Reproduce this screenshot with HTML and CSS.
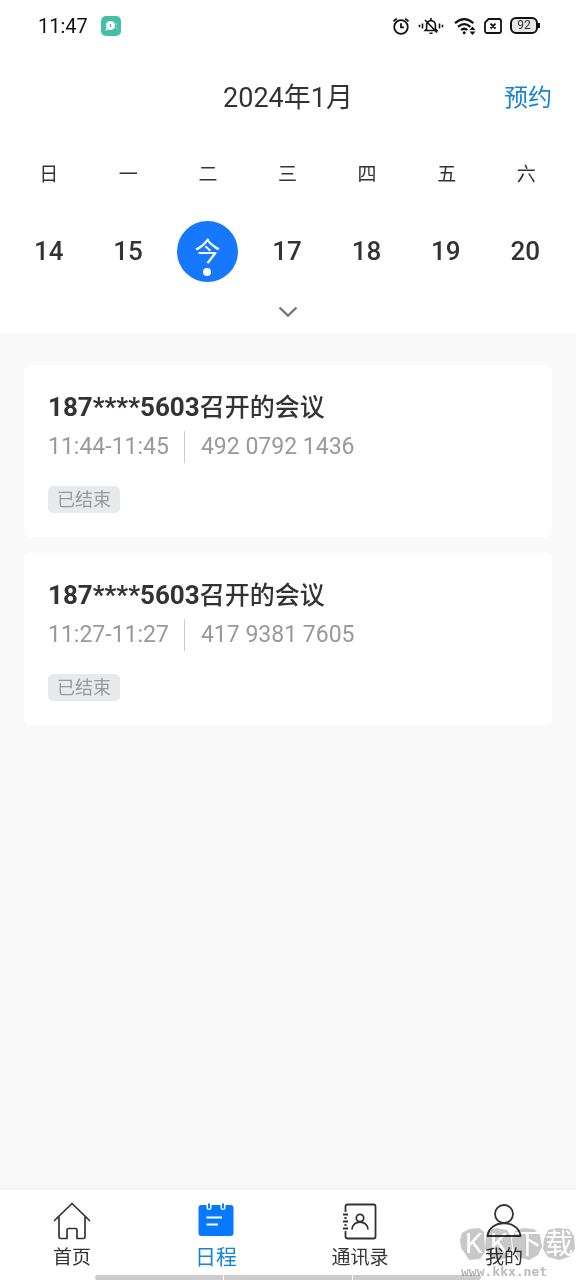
FILE: index.html
```html
<!DOCTYPE html>
<html lang="zh-CN">
<head>
<meta charset="utf-8">
<meta name="viewport" content="width=device-width, initial-scale=1">
<title>日程</title>
<link rel="stylesheet" href="styles.css">
</head>
<body>
<div class="app">
  <div class="status">
    <span class="clock">11:47</span>
    <svg class="app-badge" width="20" height="20" viewBox="0 0 20 20"><rect width="20" height="20" rx="5" fill="#45bea7"/><circle cx="9.500" cy="9.500" r="4.500" fill="#fff"/><path d="M9.500 8v3" stroke="#45bea7" stroke-width="1.400"/><circle cx="5.500" cy="13.500" r="1" fill="#fff"/><path d="M14.500 8h2M14.500 12h2" stroke="#b9eadf"/></svg>
    <div class="status-icons">
      <svg width="18" height="18" viewBox="0 0 18 18" fill="none" stroke="#111" stroke-width="1.8"><circle cx="9" cy="10" r="6.8"/><path d="M9 6.3v4h3M1.500 4.200 4.800 1.600M16.500 4.200 13.200 1.600"/></svg>
      <svg width="26" height="18" viewBox="0 0 26 18" fill="none" stroke="#111" stroke-width="1.6"><path d="M8.600 12V8a4.400 4.400 0 0 1 8.800 0v4l1.400 1.500H7.200zM13 1v2.500M11.500 16.200h3M7 3l12 12.500M4.500 6.500v5M1.500 7.800v2.400M21.500 6.500v5M24.500 7.800v2.400"/></svg>
      <svg class="wifi" width="22" height="18" viewBox="0 0 22 18" fill="none" stroke="#111" stroke-width="2.2"><path d="M1 6.200q9.200-8 18.400 0M4 9.800q6.200-5.200 12.400 0M7 13q3.200-2.500 6.400 0"/><circle cx="10.200" cy="15.800" r="1.500" fill="#111" stroke="none"/><path d="m15.500 13 3-3.500 3 3.500zM15.500 14.500l3 3.500 3-3.500z" fill="#111" stroke="none"/></svg>
      <svg width="18" height="18" viewBox="0 0 18 18" fill="none" stroke="#111" stroke-width="1.800"><path d="M4.500 2H15a2 2 0 0 1 2 2v10a2 2 0 0 1-2 2H3a2 2 0 0 1-2-2V5.500zM6.500 6.700l5 4.800M11.500 6.700l-5 4.800"/></svg>
      <span class="battery">92</span>
    </div>
  </div>

  <header class="calendar">
    <div class="month-row">
      <h1 class="month">2024年1月</h1>
      <button class="book" type="button">预约</button>
    </div>
    <div class="week">
      <span>日</span><span>一</span><span>二</span><span>三</span><span>四</span><span>五</span><span>六</span>
    </div>
    <div class="dates">
      <button type="button">14</button>
      <button type="button">15</button>
      <button type="button" class="today" aria-current="date">今</button>
      <button type="button">17</button>
      <button type="button">18</button>
      <button type="button">19</button>
      <button type="button">20</button>
    </div>
    <button class="expand" type="button" aria-label="展开"><svg width="20" height="12" viewBox="0 0 20 12" fill="none" stroke="#777" stroke-width="2.400"><path d="m1.500 1.500 8.500 8 8.500-8"/></svg></button>
  </header>

  <main class="meetings">
    <article class="card">
      <h2 class="card-title"><b>187****5603</b>召开的会议</h2>
      <div class="card-info"><span>11:44-11:45</span><span class="meeting-id">492 0792 1436</span></div>
      <span class="tag">已结束</span>
    </article>
    <article class="card">
      <h2 class="card-title"><b>187****5603</b>召开的会议</h2>
      <div class="card-info"><span>11:27-11:27</span><span class="meeting-id">417 9381 7605</span></div>
      <span class="tag">已结束</span>
    </article>
  </main>

  <nav class="tabs">
    <a href="#home"><svg width="40" height="40" viewBox="0 0 40 40" fill="none" stroke="#333" stroke-width="1.700" stroke-linejoin="round" stroke-linecap="round"><path d="M2.500 20.500 20 3.500l17.500 17M7 17v20q0 1.500 1.500 1.500H15V30q0-1.500 1.500-1.500h7Q25 28.500 25 30v8.500h6.500q1.500 0 1.500-1.500V17"/></svg><span>首页</span></a>
    <a href="#schedule" class="active"><svg width="40" height="40" viewBox="0 0 40 40"><rect x="2.500" y="5" width="35" height="31" rx="3" fill="#0878ff"/><path d="M13 4v3.500M27 4v3.500" stroke="#fff" stroke-width="5" stroke-linecap="round"/><path d="M13 3.500v5M27 3.500v5" stroke="#0878ff" stroke-width="2"/><path d="M10.500 17.500H26M10.500 24.500H22" stroke="#fff" stroke-width="2"/></svg><span>日程</span></a>
    <a href="#contacts"><svg width="40" height="40" viewBox="0 0 40 40" fill="none" stroke="#333" stroke-width="1.800"><path d="M5.500 12V6.500q0-2 2-2h26q2 0 2 2v30q0 2-2 2h-26q-2 0-2-2V31M3 14.500h5M3 21.500h5M3 28.500h5M4.500 18h2M4.500 25h2"/><circle cx="20" cy="18" r="3.700"/><path d="M12 29.500c.5-10 15.500-10 16 0"/></svg><span>通讯录</span></a>
    <a href="#me"><svg width="40" height="40" viewBox="0 0 40 40" fill="none" stroke="#333" stroke-width="1.800" stroke-linejoin="round"><circle cx="20" cy="14" r="9"/><path d="M3.500 36c2-17 31-17 33 0z"/></svg><span>我的</span></a>
    <div class="home-bar"></div>
    <svg class="watermark" width="116" height="54" viewBox="0 0 116 54">
      <g fill="#c8c8c8">
        <path d="m2 7 7-4 10-1 5 4 1 20-5 7-11 1-3-5-5-7-1-8z"/>
        <path d="m28 4 9-2 10 2 4 6 1 13-5 9-9 2-9-4-4-8 1-12z"/>
        <path d="m55 5 8-3 11 1 6 6 2 12-4 8-9 5-11-3-5-9-1-9z"/>
        <path d="m88 4 9-2 12 1 5 7 1 13-6 8-10 3-11-3-5-8 1-10z"/>
      </g>
      <g class="brand"><text x="5" y="27">K</text><text x="30" y="27">K</text><text x="54" y="28">下</text><text x="85" y="28">载</text></g>
      <text class="site" x="1" y="50">www.kkx.net</text>
    </svg>
  </nav>
</div>
</body>
</html>
```
FILE: styles.css
```css
* { box-sizing: border-box; }
body {
  margin: 0;
  background: #f9f9f9;
  color: #333;
  font-family: Roboto, "Noto Sans CJK SC", sans-serif;
}
button {
  border: 0;
  padding: 0;
  background: none;
  color: inherit;
  font: inherit;
}
svg { display: block; }
.app {
  display: flex;
  flex-direction: column;
  min-height: 100vh;
}
.status {
  display: flex;
  align-items: center;
  height: 51px;
  padding: 0 38px;
  background: #fff;
}
.clock {
  color: #111;
  font-size: 20px;
}
.app-badge { margin-left: 13px; }
.status-icons {
  display: flex;
  align-items: center;
  gap: 8px;
  margin-left: auto;
}
.wifi { margin-left: 2px; }
.battery {
  position: relative;
  width: 28px;
  border: 2px solid #111;
  border-radius: 6px;
  background: #e6e6e6;
  color: #333;
  font-size: 12px;
  line-height: 13px;
  text-align: center;
}
.battery::after {
  content: "";
  position: absolute;
  top: 4px;
  right: -4px;
  width: 2px;
  height: 5px;
  background: #111;
}
.calendar { background: #fff; }
.month-row {
  display: grid;
  grid-template-columns: 1fr auto 1fr;
  align-items: center;
  height: 88px;
  padding: 0 24px;
}
.month {
  grid-column: 2;
  margin: 0;
  font-size: 27px;
  font-weight: 400;
}
.book {
  justify-self: end;
  color: #1684d8;
  font-size: 24px;
}
.week, .dates {
  display: grid;
  grid-template-columns: repeat(7, 1fr);
  align-items: center;
  justify-items: center;
}
.week {
  height: 66px;
  padding: 0 10px 0 9px;
  font-size: 19px;
}
.dates {
  height: 92px;
  padding: 0 11px 0 9px;
  font-size: 26px;
  font-weight: 500;
}
.today {
  position: relative;
  width: 61px;
  height: 61px;
  padding-bottom: 4px;
  border-radius: 50%;
  background: #1677ff;
  color: #fff;
  font-weight: 400;
}
.today::after {
  content: "";
  position: absolute;
  left: 26px;
  bottom: 6px;
  width: 8px;
  height: 8px;
  border-radius: 50%;
  background: #fff;
}
.expand {
  display: flex;
  align-items: center;
  justify-content: center;
  width: 100%;
  height: 36px;
  padding-bottom: 6px;
}
.meetings {
  flex: 1;
  display: flex;
  flex-direction: column;
  gap: 16px;
  padding: 32px 24px;
}
.card {
  padding: 24px;
  border-radius: 6px;
  background: #fff;
}
.card-title {
  margin: 0;
  font-size: 25px;
  font-weight: 500;
  line-height: 37px;
}
.card-title b {
  font-size: 26px;
  font-weight: 700;
}
.card-info {
  display: flex;
  margin-top: 5px;
  color: #999;
  font-size: 23px;
  line-height: 32px;
}
.meeting-id {
  margin-left: 15px;
  padding-left: 16px;
  border-left: 1px solid #ccc;
}
.tag {
  display: block;
  width: fit-content;
  margin-top: 23px;
  padding: 0 9px;
  border-radius: 5px;
  background: #e7e9ed;
  color: #999;
  font-size: 18px;
  line-height: 27px;
}
.tabs {
  position: relative;
  display: grid;
  grid-template-columns: repeat(4, 1fr);
  height: 90px;
  padding-top: 10px;
  background: #fff;
  box-shadow: 0 -2px 8px rgba(0, 0, 0, 0.04);
}
.tabs a {
  display: flex;
  flex-direction: column;
  align-items: center;
  color: #333;
  font-size: 19px;
  line-height: 36px;
  text-decoration: none;
}
.tabs .active {
  color: #1684d8;
  font-size: 21px;
  line-height: 34px;
}
.home-bar {
  position: absolute;
  right: 95px;
  bottom: 0;
  left: 95px;
  height: 5px;
  border-radius: 3px;
  background: repeating-linear-gradient(90deg, #ccc 0 128px, #fff 128px 129px);
}
.watermark {
  position: absolute;
  right: 0;
  bottom: 0;
  mix-blend-mode: multiply;
  pointer-events: none;
}
.brand {
  fill: #fff;
  font-size: 28px;
}
.site {
  fill: #bbb;
  font-family: "DejaVu Sans Mono", monospace;
  font-size: 13px;
  font-weight: 700;
}
```
